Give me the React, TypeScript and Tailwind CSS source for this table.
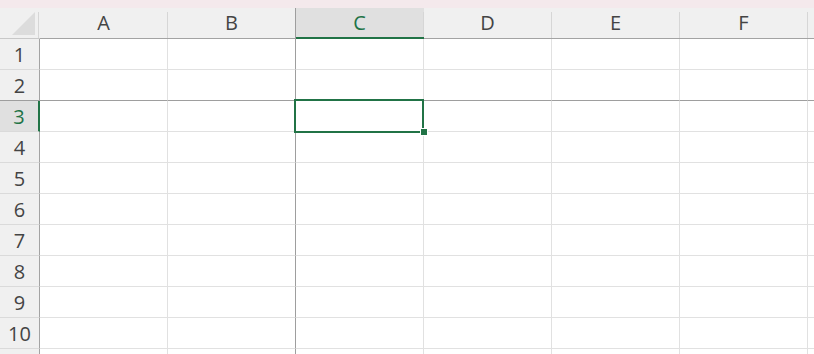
import React from 'react';

const COLS = ['A', 'B', 'C', 'D', 'E', 'F'];
const ROWS = [1, 2, 3, 4, 5, 6, 7, 8, 9, 10];

function Corner() {
  return (
    <div className="flex h-[31px] bg-[#f0f0f0] border-b border-b-[#c8c8c8]">
      <div className="flex-1 flex items-start justify-end pt-[4px] pr-[3px]">
        <svg width="23" height="23" viewBox="0 0 23 23">
          <polygon points="23,0 23,23 0,23" fill="#dcdcdc" />
        </svg>
      </div>
      <div className="w-px mt-[4px] bg-[#d6d6d6]" />
      <div className="w-px" />
    </div>
  );
}

function ColHeader({ label, selected, frozen }: { label: string; selected: boolean; frozen: boolean }) {
  return (
    <div
      className={
        'flex h-[31px] ' +
        (selected ? 'bg-[#e0e0e0] border-b-2 border-b-[#217346] ' : 'bg-[#f0f0f0] border-b border-b-[#a3a3a3] ')
      }
    >
      <div
        className={
          'flex-1 flex items-center justify-center text-[20px] leading-none ' +
          (selected ? 'text-[#217346]' : 'text-[#444444]')
        }
      >
        {label}
      </div>
      {frozen ? <div className="w-px bg-[#9e9e9e]" /> : <div className="w-px mt-[4px] bg-[#d6d6d6]" />}
    </div>
  );
}

function RowHeader({ n, selected }: { n?: number; selected: boolean }) {
  const bottom = n === 2 ? 'border-b-[#9e9e9e]' : 'border-b-[#dadada]';
  return (
    <div
      className={
        'h-[31px] flex items-center justify-center border-b text-[20px] leading-none ' +
        bottom +
        ' ' +
        (selected
          ? 'bg-[#e0e0e0] text-[#217346] border-r-2 border-r-[#217346]'
          : 'bg-[#f0f0f0] text-[#444444] border-r border-r-[#a3a3a3]')
      }
    >
      {n !== undefined && <span className="pt-[2px]">{n}</span>}
    </div>
  );
}

function Cell({ row, col }: { row: number; col: number }) {
  const right = col === 1 ? 'border-r border-r-[#9e9e9e]' : col < 6 ? 'border-r border-r-[#e1e1e1]' : '';
  const bottom = row === 2 ? 'border-b-[#9e9e9e]' : 'border-b-[#e1e1e1]';
  const active = row === 3 && col === 2;
  return (
    <div className={'h-[31px] bg-white border-b ' + bottom + ' ' + right + (active ? ' relative' : '')}>
      {active && (
        <div className="absolute left-[-2px] top-[-2px] w-[130px] h-[34px] border-2 border-[#217346] z-10">
          <div className="absolute left-[124px] top-[27px] w-[8px] h-[8px] bg-[#217346] border border-white" />
        </div>
      )}
    </div>
  );
}

function Row({ r, label }: { r: number; label: boolean }) {
  return (
    <>
      <RowHeader n={label ? r : undefined} selected={r === 3} />
      {COLS.map((c, i) => (
        <Cell key={c} row={r} col={i} />
      ))}
      <div className={'h-[31px] bg-white border-b ' + (r === 2 ? 'border-b-[#9e9e9e]' : 'border-b-[#e1e1e1]')} />
    </>
  );
}

export default function App() {
  return (
    <div
      className="w-[814px] h-[354px] overflow-hidden bg-white"
      style={{ fontFamily: '"Open Sans", "Noto Sans", sans-serif' }}
    >
      <div className="h-[8px] bg-[#f4e9ec]" />
      <div className="grid grid-cols-[40px_repeat(6,128px)_1fr]">
        <Corner />
        {COLS.map((c, i) => (
          <ColHeader key={c} label={c} selected={c === 'C'} frozen={i === 1} />
        ))}
        <div className="h-[31px] bg-[#f0f0f0] border-b border-b-[#a3a3a3]" />
        {ROWS.map((r) => (
          <Row key={r} r={r} label />
        ))}
        {/* partial row peeking under row 10 */}
        <Row r={11} label={false} />
      </div>
    </div>
  );
}
